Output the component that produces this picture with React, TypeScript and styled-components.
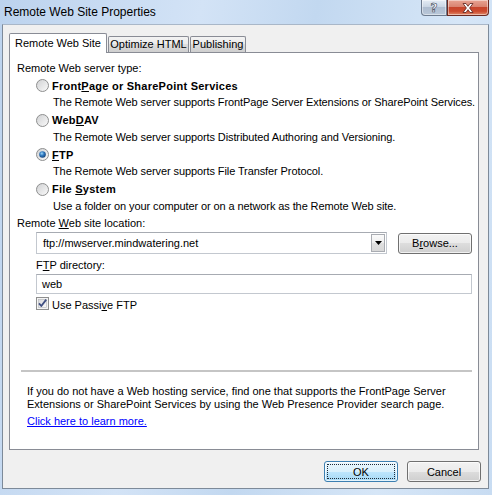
import React, { useId } from 'react';
import styled, { createGlobalStyle } from 'styled-components';

const GlobalStyle = createGlobalStyle`
  html, body {
    margin: 0;
    padding: 0;
    background: #c6daf1;
  }
  body {
    font-family: "Liberation Sans", Arial, sans-serif;
    font-size: 11px;
    color: #000;
  }
`;

const Frame = styled.div`
  width: 492px;
  height: 495px;
  box-sizing: border-box;
  padding: 0 3px 6px 2px;
  display: flex;
  flex-direction: column;
  background: linear-gradient(100deg, #bcd3ee 0%, #d3e3f6 35%, #c2d8f0 55%, #d6e6f7 80%, #c8dcf2 100%);
`;

const TitleBar = styled.div`
  height: 24px;
  display: flex;
  align-items: flex-start;
`;

const Title = styled.div`
  margin: 4px 0 0 2px;
  font-size: 12px;
  line-height: 16px;
  color: #000;
`;

const CaptionButtons = styled.div`
  margin-left: auto;
  display: flex;
`;

const CaptionButton = styled.div<{ $kind: 'help' | 'close' }>`
  width: ${p => (p.$kind === 'close' ? 42 : 26)}px;
  height: 16px;
  box-sizing: border-box;
  display: flex;
  align-items: center;
  justify-content: center;
  border: 1px solid ${p => (p.$kind === 'close' ? '#6b2a22' : '#6d7b8e')};
  border-top: none;
  border-radius: ${p => (p.$kind === 'close' ? '0 0 4px 0' : '0 0 0 4px')};
  background: ${p =>
    p.$kind === 'close'
      ? 'linear-gradient(#e8a493 0%, #d98370 45%, #c7452c 50%, #cc4a2e 75%, #e08a6a 100%)'
      : 'linear-gradient(#e4ecf5 0%, #cad6e4 45%, #aebdd0 50%, #b9c7d8 100%)'};
  box-shadow: inset 0 0 0 1px rgba(255, 255, 255, 0.45);
`;

const HelpGlyph = styled.span`
  font-family: "DejaVu Sans", sans-serif;
  font-weight: bold;
  font-size: 12px;
  line-height: 14px;
  color: #fff;
  -webkit-text-stroke: 0.6px #3a4656;
`;

const Client = styled.div`
  flex: 1;
  box-sizing: border-box;
  background: #f0f0f0;
  border: 1px solid #7d8a99;
  border-top-color: #a9b7c8;
  padding: 8px 9px 0 6px;
  display: flex;
  flex-direction: column;
`;

const TabStrip = styled.div`
  display: flex;
  align-items: flex-end;
  height: 20px;
  margin-bottom: -1px;
  position: relative;
  z-index: 1;
`;

const Tab = styled.div<{ $active?: boolean; $width: number }>`
  width: ${p => p.$width}px;
  box-sizing: border-box;
  height: ${p => (p.$active ? 20 : 16)}px;
  margin-bottom: ${p => (p.$active ? 0 : 1)}px;
  border: 1px solid #898c95;
  border-bottom: none;
  border-radius: 2px 2px 0 0;
  background: ${p => (p.$active ? '#fff' : 'linear-gradient(#f3f3f3 0%, #ebebeb 50%, #dddddd 50%, #cfcfcf 100%)')};
  text-align: center;
  line-height: ${p => (p.$active ? 19 : 15)}px;
  white-space: nowrap;

  & + & {
    margin-left: ${p => (p.$active ? 0 : 1)}px;
  }
`;

const Panel = styled.div`
  height: 398px;
  box-sizing: border-box;
  background: #fff;
  border: 1px solid #898c95;
  padding: 7px 6px 21px 7px;
  display: flex;
  flex-direction: column;
`;

const Label = styled.div<{ $indent?: number; $gap?: number }>`
  line-height: 17px;
  margin: ${p => p.$gap ?? 0}px 0 0 ${p => p.$indent ?? 0}px;
  white-space: nowrap;
`;

const Options = styled.div`
  margin-left: 19px;
  display: flex;
  flex-direction: column;
`;

const Option = styled.div`
  & + & {
    margin-top: 0.5px;
  }
`;

const OptionRow = styled.div`
  display: flex;
  align-items: center;
  height: 17px;
  gap: 3px;
`;

const OptionTitle = styled.span`
  font-weight: bold;
  letter-spacing: 0.25px;
  white-space: nowrap;
`;

const OptionText = styled.div`
  margin-left: 17px;
  line-height: 17px;
  letter-spacing: -0.1px;
  white-space: nowrap;
`;

const LocationRow = styled.div`
  margin: 0.5px 0 0 19px;
  display: flex;
  align-items: center;
  gap: 11px;
`;

const ComboBox = styled.div`
  width: 351px;
  height: 22px;
  box-sizing: border-box;
  border: 1px solid #c3c8cf;
  border-top-color: #a7abb2;
  padding: 1px 1px 1px 6px;
  display: flex;
  align-items: center;
`;

const ComboValue = styled.span`
  flex: 1;
  white-space: nowrap;
`;

const DropButton = styled.div`
  width: 14px;
  height: 100%;
  box-sizing: border-box;
  border: 1px solid #a9acb2;
  background: linear-gradient(#fbfbfb 0%, #eeeeee 50%, #e0e0e0 50%, #d8d8d8 100%);
  display: flex;
  align-items: center;
  justify-content: center;
`;

const PushButton = styled.div<{ $width: number; $height: number; $default?: boolean }>`
  width: ${p => p.$width}px;
  height: ${p => p.$height}px;
  box-sizing: border-box;
  border: 1px solid ${p => (p.$default ? '#3c7fb1' : '#707070')};
  border-radius: 3px;
  background: ${p =>
    p.$default
      ? 'linear-gradient(#eaf6fd 0%, #d9f0fc 50%, #bee6fd 50%, #a7d9f5 100%)'
      : 'linear-gradient(#f2f2f2 0%, #ebebeb 50%, #dddddd 50%, #cfcfcf 100%)'};
  box-shadow: inset 0 0 0 1px rgba(255, 255, 255, 0.7);
  display: flex;
  align-items: center;
  justify-content: center;
  position: relative;
  white-space: nowrap;
`;

const FocusRing = styled.span`
  position: absolute;
  inset: 2px;
  border: 1px dotted #1e2a38;
`;

const TextField = styled.div`
  margin: 0.5px 0 0 19px;
  width: 436px;
  height: 20px;
  box-sizing: border-box;
  border: 1px solid #c3c8cf;
  border-top-color: #a7abb2;
  padding-left: 5px;
  line-height: 18px;
`;

const CheckRow = styled.div`
  margin: 3px 0 0 19px;
  display: flex;
  align-items: flex-start;
  gap: 3px;
  line-height: 17px;
`;

const Footer = styled.div`
  margin-top: auto;
  display: flex;
  flex-direction: column;
`;

const Separator = styled.div`
  height: 2px;
  margin-left: 4px;
  background: #c5c5c5;
`;

const FooterText = styled.div`
  margin: 13px 0 0 10px;
  line-height: 13px;
`;

const LearnLink = styled.a`
  margin: 4px 0 0 10px;
  line-height: 13px;
  color: #0000ff;
  text-decoration: underline;
  align-self: flex-start;
`;

const ButtonRow = styled.div`
  margin: 11px -2px 0 0;
  display: flex;
  justify-content: flex-end;
  gap: 9px;
`;

const Radio = ({ checked }: { checked?: boolean }) => {
  const id = useId();
  return (
    <svg width="13" height="13" viewBox="0 0 13 13" style={{ flex: 'none' }}>
      <defs>
        <linearGradient id={`${id}f`} x1="0" y1="0" x2="1" y2="1">
          <stop offset="0" stopColor="#cfd0d2" />
          <stop offset="1" stopColor="#fbfbfb" />
        </linearGradient>
        <radialGradient id={`${id}d`} cx="0.4" cy="0.35" r="0.7">
          <stop offset="0" stopColor="#9fd8f8" />
          <stop offset="0.45" stopColor="#2f79c0" />
          <stop offset="1" stopColor="#153f72" />
        </radialGradient>
      </defs>
      <circle cx="6.5" cy="6.5" r="6" fill={`url(#${id}f)`} stroke="#8e8f8f" />
      {checked && <circle cx="6.5" cy="6.5" r="3.3" fill={`url(#${id}d)`} />}
    </svg>
  );
};

const Checkbox = () => {
  const id = useId();
  return (
    <svg width="13" height="13" viewBox="0 0 13 13" style={{ flex: 'none' }}>
      <defs>
        <linearGradient id={`${id}c`} x1="0" y1="0" x2="1" y2="1">
          <stop offset="0" stopColor="#d8d9db" />
          <stop offset="1" stopColor="#fbfbfb" />
        </linearGradient>
      </defs>
      <rect x="0.5" y="0.5" width="12" height="12" fill="#f4f4f4" stroke="#8e8f8f" />
      <rect x="2.5" y="2.5" width="8" height="8" fill={`url(#${id}c)`} stroke="#b4b6b9" strokeWidth="0.6" />
      <path d="M3 6.3 L5.3 9 L10.2 2.6" fill="none" stroke="#3f4f82" strokeWidth="1.8" strokeLinejoin="round" />
    </svg>
  );
};

const CloseGlyph = () => (
  <svg width="16" height="12" viewBox="0 0 16 12">
    <path
      d="M3 1.5 H6 L8 4.3 L10 1.5 H13 L9.6 6 L13 10.5 H10 L8 7.7 L6 10.5 H3 L6.4 6 Z"
      fill="#fff"
      stroke="#5a2019"
      strokeWidth="0.8"
      strokeLinejoin="round"
    />
  </svg>
);

const DropArrow = () => (
  <svg width="7" height="4" viewBox="0 0 7 4">
    <path d="M0 0 H7 L3.5 4 Z" fill="#000" />
  </svg>
);

const serverTypes = [
  { key: 'fp', title: <>Front<u>P</u>age or SharePoint Services</>, text: 'The Remote Web server supports FrontPage Server Extensions or SharePoint Services.' },
  { key: 'dav', title: <>Web<u>D</u>AV</>, text: 'The Remote Web server supports Distributed Authoring and Versioning.' },
  { key: 'ftp', title: <><u>F</u>TP</>, text: 'The Remote Web server supports File Transfer Protocol.', checked: true },
  { key: 'fs', title: <>File <u>S</u>ystem</>, text: 'Use a folder on your computer or on a network as the Remote Web site.' },
];

const App = () => {
  return (
    <>
      <GlobalStyle />
      <Frame>
        <TitleBar>
          <Title>Remote Web Site Properties</Title>
          <CaptionButtons>
            <CaptionButton $kind="help">
              <HelpGlyph>?</HelpGlyph>
            </CaptionButton>
            <CaptionButton $kind="close">
              <CloseGlyph />
            </CaptionButton>
          </CaptionButtons>
        </TitleBar>

        <Client>
          <TabStrip>
            <Tab $active $width={98}>Remote Web Site</Tab>
            <Tab $width={81}>Optimize HTML</Tab>
            <Tab $width={56}>Publishing</Tab>
          </TabStrip>

          <Panel>
            <Label>Remote Web server type:</Label>
            <Options>
              {serverTypes.map(t => (
                <Option key={t.key}>
                  <OptionRow>
                    <Radio checked={t.checked} />
                    <OptionTitle>{t.title}</OptionTitle>
                  </OptionRow>
                  <OptionText>{t.text}</OptionText>
                </Option>
              ))}
            </Options>

            <Label>Remote <u>W</u>eb site location:</Label>
            <LocationRow>
              <ComboBox>
                <ComboValue>ftp://mwserver.mindwatering.net</ComboValue>
                <DropButton>
                  <DropArrow />
                </DropButton>
              </ComboBox>
              <PushButton $width={74} $height={21}>
                B<u>r</u>owse...
              </PushButton>
            </LocationRow>

            <Label $indent={19} $gap={2.5}>
              F<u>T</u>P directory:
            </Label>
            <TextField>web</TextField>

            <CheckRow>
              <Checkbox />
              <span>Use Passi<u>v</u>e FTP</span>
            </CheckRow>

            <Footer>
              <Separator />
              <FooterText>
                If you do not have a Web hosting service, find one that supports the FrontPage Server
                <br />
                Extensions or SharePoint Services by using the Web Presence Provider search page.
              </FooterText>
              <LearnLink href="#">Click here to learn more.</LearnLink>
            </Footer>
          </Panel>

          <ButtonRow>
            <PushButton $width={74} $height={21} $default>
              <FocusRing />
              OK
            </PushButton>
            <PushButton $width={74} $height={21}>
              Cancel
            </PushButton>
          </ButtonRow>
        </Client>
      </Frame>
    </>
  );
};

export default App;
